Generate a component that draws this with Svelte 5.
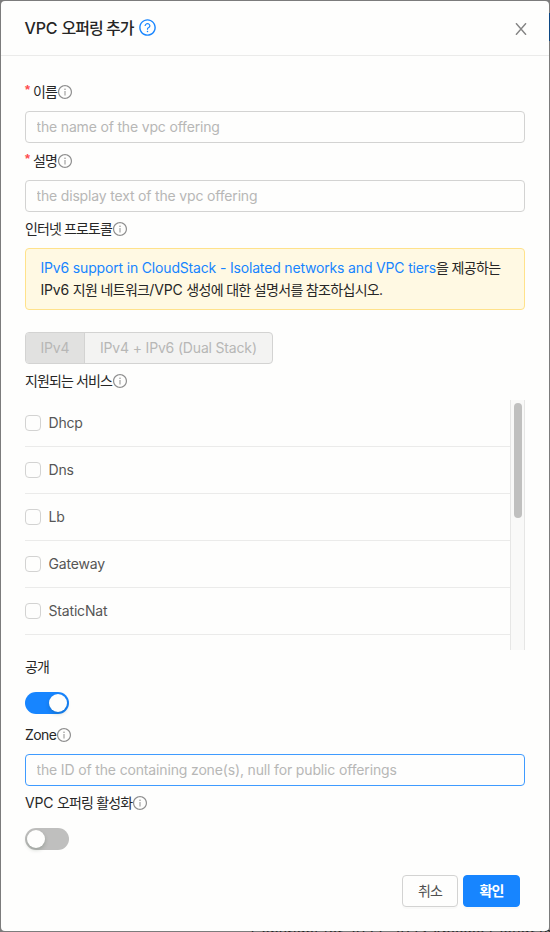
<script>
  const services = ['Dhcp', 'Dns', 'Lb', 'Gateway', 'StaticNat'];
  let isPublic = $state(true);
  let enabled = $state(false);
</script>

{#snippet info()}
  <svg class="info" viewBox="0 0 1024 1024" aria-hidden="true">
    <path d="M512 64C264.6 64 64 264.6 64 512s200.6 448 448 448 448-200.6 448-448S759.4 64 512 64zm0 820c-205.4 0-372-166.6-372-372s166.6-372 372-372 372 166.6 372 372-166.6 372-372 372z" />
    <path d="M464 336a48 48 0 1 0 96 0 48 48 0 1 0-96 0zm72 112h-48c-4.4 0-8 3.6-8 8v272c0 4.4 3.6 8 8 8h48c4.4 0 8-3.6 8-8V456c0-4.4-3.6-8-8-8z" />
  </svg>
{/snippet}

<div class="page">
  <div class="behind-button"></div>
  <div class="behind-text">Copyright for 2022, 2023 Apache CloudStack</div>
  <div class="modal">
    <header>
      <h1>VPC <span class="ko">오퍼링 추가</span></h1>
      <svg class="help" viewBox="0 0 1024 1024" aria-hidden="true">
        <path d="M512 64C264.6 64 64 264.6 64 512s200.6 448 448 448 448-200.6 448-448S759.4 64 512 64zm0 820c-205.4 0-372-166.6-372-372s166.6-372 372-372 372 166.6 372 372-166.6 372-372 372z" />
        <path d="M623.6 316.7C593.6 290.4 554 276 512 276s-81.6 14.5-111.6 40.7C369.2 344 352 380.7 352 420v7.6c0 4.4 3.6 8 8 8h48c4.4 0 8-3.6 8-8V420c0-44.1 43.1-80 96-80s96 35.9 96 80c0 31.1-22 59.6-56.1 72.7-21.2 8.1-39.2 22.3-52.1 40.9-13.1 19-19.9 41.8-19.9 64.9V620c0 4.4 3.6 8 8 8h48c4.4 0 8-3.6 8-8v-22.7a48.3 48.3 0 0 1 30.9-44.8c59-22.7 97.1-74.7 97.1-132.5.1-39.3-17.1-76-48.3-103.3zM472 732a40 40 0 1 0 80 0 40 40 0 1 0-80 0z" />
      </svg>
      <button class="close" aria-label="닫기">
        <svg viewBox="0 0 12 12"><path d="M1 .2 11 11.8M11 .2 1 11.8" /></svg>
      </button>
    </header>

    <form onsubmit={(e) => e.preventDefault()}>
      <div class="label first"><i>*</i><span class="ko">이름</span>{@render info()}</div>
      <input class="field" placeholder="the name of the vpc offering" />

      <div class="label"><i>*</i><span class="ko">설명</span>{@render info()}</div>
      <input class="field" placeholder="the display text of the vpc offering" />

      <div class="label protocol"><span class="ko">인터넷 프로토콜</span>{@render info()}</div>
      <div class="alert">
        <div><a href="#ipv6">IPv6 support in CloudStack - Isolated networks and VPC tiers</a><span class="ko">을 제공하는</span></div>
        <div>IPv6 <span class="ko">지원 네트워크</span>/VPC <span class="ko">생성에 대한 설명서를 참조하십시오.</span></div>
      </div>
      <div class="radios">
        <div class="radio on">IPv4</div>
        <div class="radio">IPv4 + IPv6 (Dual Stack)</div>
      </div>

      <div class="label services"><span class="ko">지원되는 서비스</span>{@render info()}</div>
      <div class="scroller">
        <div class="list">
          {#each services as name}
            <label class="item"><span class="box"></span>{name}</label>
          {/each}
        </div>
        <div class="track"><div class="thumb"></div></div>
      </div>

      <div class="label public"><span class="ko">공개</span></div>
      <button type="button" class="switch" class:on={isPublic} aria-label="공개" onclick={() => (isPublic = !isPublic)}><span></span></button>

      <div class="label zone"><span>Zone</span>{@render info()}</div>
      <input class="field focus" placeholder="the ID of the containing zone(s), null for public offerings" />

      <div class="label enable">VPC&nbsp;<span class="ko">오퍼링 활성화</span>{@render info()}</div>
      <button type="button" class="switch last" class:on={enabled} aria-label="활성화" onclick={() => (enabled = !enabled)}><span></span></button>

      <footer>
        <button type="button" class="btn cancel"><span class="ko">취소</span></button>
        <button type="submit" class="btn ok"><span class="ko">확인</span></button>
      </footer>
    </form>
  </div>
</div>

<style>
  :global(body) { margin: 0; }
  * { box-sizing: border-box; }
  .page {
    position: relative;
    width: 550px;
    height: 932px;
    padding: 1px;
    overflow: hidden;
    background: #7c7c7c;
    font: 14px/22px Inter, "Noto Sans CJK KR", sans-serif;
    letter-spacing: -0.17px;
    color: #262626;
  }
  .behind-button { position: absolute; right: 0; top: 13px; width: 1px; height: 28px; background: #0c4682; }
  .behind-text { position: absolute; left: 251px; top: 922px; white-space: nowrap; letter-spacing: .35px; color: #222; }
  .modal {
    position: relative;
    width: 548px;
    height: 930px;
    border-radius: 4px;
    background: #fefefd;
  }
  header {
    display: flex;
    align-items: center;
    height: 55px;
    padding: 0 22px 0 24px;
    border-bottom: 1px solid #ebebea;
  }
  h1 { margin: 0 0 0 -0.5px; font-size: 16px; line-height: 22px; font-weight: 500; white-space: nowrap; }
  .ko { letter-spacing: -0.88px; white-space: pre; }
  h1 .ko { letter-spacing: -0.95px; }
  .help { width: 19px; height: 19px; margin-left: 4.5px; margin-bottom: 1px; fill: #1785ff; }
  .close { margin: 2px 0 0 auto; width: 12px; height: 12px; padding: 0; border: 0; background: none; display: flex; }
  .close svg { width: 12px; height: 12px; fill: none; stroke: #858585; stroke-width: 1.4; }
  form { padding: 0 24px; display: flex; flex-direction: column; align-items: flex-start; }
  .label { display: flex; align-items: center; height: 37px; padding-bottom: 2px; white-space: nowrap; }
  .label.first { margin-top: 18px; }
  .label.protocol { height: 36px; }
  .label.services { height: 36px; }
  .label.public { height: 34px; padding-bottom: 0; }
  .label.zone { height: 40px; padding: 2px 0 0; letter-spacing: -0.6px; }
  .label.enable { padding-bottom: 4px; }
  .label i { width: 8px; height: 20px; font: bold 13px/16px "Liberation Sans", sans-serif; color: #ff4d4f; }
  .info { width: 16px; height: 16px; fill: #8f8f8f; flex: none; }
  .label.zone .info { margin-left: -0.5px; }
  .field {
    width: 500px;
    height: 32px;
    padding: 0 10.5px 1px;
    border: 1px solid #d3d3d2;
    border-radius: 4px;
    background: transparent;
    font: inherit;
    letter-spacing: inherit;
    outline: none;
  }
  .field::placeholder { color: #b7b7b6; opacity: 1; }
  .field.focus { border-color: #3f9bff; padding-bottom: 2px; letter-spacing: -0.15px; }
  .alert {
    width: 500px;
    height: 62px;
    padding: 8px 14.5px;
    border: 1px solid #ffe28b;
    border-radius: 4px;
    background: #fff9e3;
    white-space: nowrap;
  }
  .alert .ko { letter-spacing: -0.68px; }
  .alert a { color: #1785ff; text-decoration: none; }
  .radios { display: flex; margin-top: 22px; height: 32px; border: 1px solid #d3d3d2; border-radius: 4px; background: #f3f3f2; overflow: hidden; color: #b7b7b6; line-height: 30px; white-space: nowrap; }
  .radio { width: 187px; padding-left: 15px; }
  .radio.on { width: 59px; padding-left: 14.5px; border-right: 1px solid #d3d3d2; background: #e1e1e0; }
  .scroller { display: flex; width: 500px; height: 250px; }
  .list { width: 485px; }
  .item { display: flex; align-items: center; height: 47px; border-bottom: 1px solid #ebebea; color: #565656; }
  .box { width: 16px; height: 16px; margin-right: 7.5px; border: 1px solid #d3d3d2; border-radius: 4px; }
  .track { width: 15px; padding: 3px 0 0 3px; border: 1px solid #e6e6e5; border-width: 0 1px; background: #f9f9f8; }
  .thumb { width: 8px; height: 115px; border-radius: 4px; background: #c0c0bf; }
  .switch { width: 44px; height: 22px; margin-top: 8px; padding: 2px; border: 0; border-radius: 11px; display: flex; background: #bfbfbe; }
  .switch.on { justify-content: flex-end; background: #1785ff; }
  .switch span { width: 18px; height: 18px; border-radius: 9px; background: #fefefd; box-shadow: 0 2px 4px rgba(0, 35, 11, .2); }
  .switch.last { margin-top: 5px; }
  footer { align-self: stretch; display: flex; justify-content: flex-end; gap: 5px; margin-top: 25px; padding-right: 5px; }
  .btn { height: 32px; padding: 0 0 1px; border: 1px solid #d3d3d2; border-radius: 4px; background: #fefefd; font: inherit; color: #505050; box-shadow: 0 2px 0 rgba(0, 0, 0, .02); }
  .cancel { width: 56px; }
  .ok { width: 57px; border-color: #1785ff; background: #1785ff; color: #fff; font-weight: 700; }
</style>
